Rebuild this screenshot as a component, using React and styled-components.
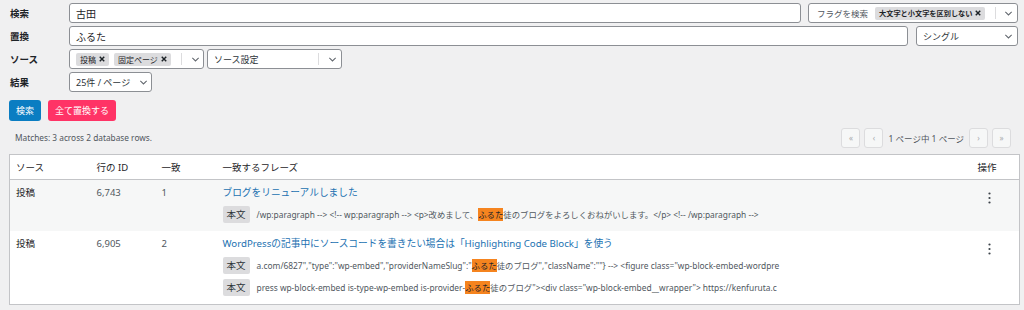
import styled, { createGlobalStyle } from "styled-components";

const GlobalStyle = createGlobalStyle`
  html, body {
    margin: 0;
    background: #f0f0f1;
    font-family: "Noto Sans", "Noto Sans CJK JP", sans-serif;
    font-size: 10px;
    color: #1d2327;
  }
`;

const Chevron = ({ size = 9 }) => (
  <svg width={size} height={size} viewBox="0 0 10 10">
    <polyline points="1.5,3.2 5,6.6 8.5,3.2" fill="none" stroke="#646970" strokeWidth="1.2" />
  </svg>
);

const Cross = () => (
  <svg width="6" height="6" viewBox="0 0 8 8">
    <path d="M1 1 L7 7 M7 1 L1 7" stroke="#1d2327" strokeWidth="1.9" />
  </svg>
);

const Dots = () => (
  <svg width="3" height="12" viewBox="0 0 3 12">
    <circle cx="1.5" cy="1.5" r="1.1" fill="#3c434a" />
    <circle cx="1.5" cy="6" r="1.1" fill="#3c434a" />
    <circle cx="1.5" cy="10.5" r="1.1" fill="#3c434a" />
  </svg>
);

const rows = [
  {
    source: "投稿",
    id: "6,743",
    count: 1,
    title: "ブログをリニューアルしました",
    contexts: [
      ["/wp:paragraph --> <!-- wp:paragraph --> <p>改めまして、", "ふるた", "徒のブログをよろしくおねがいします。</p> <!-- /wp:paragraph -->"],
    ],
  },
  {
    source: "投稿",
    id: "6,905",
    count: 2,
    title: "WordPressの記事中にソースコードを書きたい場合は「Highlighting Code Block」を使う",
    contexts: [
      ['a.com/6827","type":"wp-embed","providerNameSlug":"', "ふるた", '徒のブログ","className":""} --> <figure class="wp-block-embed-wordpre'],
      ["press wp-block-embed is-type-wp-embed is-provider-", "ふるた", '徒のブログ"><div class="wp-block-embed__wrapper"> https://kenfuruta.c'],
    ],
  },
];

function App() {
  return (
    <Page>
      <GlobalStyle />
      <Form>
        <Label>検索</Label>
        <Fields>
          <TextInput>古田</TextInput>
          <Select width={210} gap={4}>
            <Muted>フラグを検索</Muted>
            <Tag bold>
              大文字と小文字を区別しない <Cross />
            </Tag>
            <Spacer />
            <Sep />
            <ChevronBox>
              <Chevron />
            </ChevronBox>
          </Select>
        </Fields>
        <Label>置換</Label>
        <Fields gap={8}>
          <TextInput>ふるた</TextInput>
          <Select width={102}>
            <Value>シングル</Value>
            <ChevronBox>
              <Chevron />
            </ChevronBox>
          </Select>
        </Fields>
        <Label>ソース</Label>
        <Fields gap={3}>
          <Select width={135}>
            <Tag>
              投稿 <Cross />
            </Tag>
            <Tag>
              固定ページ <Cross />
            </Tag>
            <Spacer />
            <Sep />
            <ChevronBox>
              <Chevron />
            </ChevronBox>
          </Select>
          <Select width={135}>
            <Value>ソース設定</Value>
            <Sep />
            <ChevronBox>
              <Chevron />
            </ChevronBox>
          </Select>
        </Fields>
        <Label>結果</Label>
        <Fields>
          <Select width={83}>
            <Value>25件 / ページ</Value>
            <ChevronBox>
              <Chevron />
            </ChevronBox>
          </Select>
        </Fields>
      </Form>

      <Actions>
        <Button color="#0a7dc2">検索</Button>
        <Button color="#ff3366">全て置換する</Button>
      </Actions>

      <NavBar>
        <Summary>Matches: 3 across 2 database rows.</Summary>
        <Pager>
          <PageButton>«</PageButton>
          <PageButton>‹</PageButton>
          <PageInfo>1 ページ中 1 ページ</PageInfo>
          <PageButton>›</PageButton>
          <PageButton>»</PageButton>
        </Pager>
      </NavBar>

      <Table>
        <colgroup>
          <col style={{ width: 81 }} />
          <col style={{ width: 65 }} />
          <col style={{ width: 61 }} />
          <col />
          <col style={{ width: 48 }} />
        </colgroup>
        <thead>
          <tr>
            <Th>ソース</Th>
            <Th>行の ID</Th>
            <Th>一致</Th>
            <Th>一致するフレーズ</Th>
            <Th>操作</Th>
          </tr>
        </thead>
        <tbody>
          {rows.map((row, i) => (
            <Row key={row.id} shaded={i % 2 === 0}>
              <Td>{row.source}</Td>
              <Td muted>{row.id}</Td>
              <Td muted>{row.count}</Td>
              <Td>
                <Title href="#">{row.title}</Title>
                {row.contexts.map((ctx, j) => (
                  <Context key={j}>
                    <Badge>本文</Badge>
                    <Snippet>
                      {ctx[0]}
                      <Mark>{ctx[1]}</Mark>
                      {ctx[2]}
                    </Snippet>
                  </Context>
                ))}
              </Td>
              <Td>
                <Menu>
                  <Dots />
                </Menu>
              </Td>
            </Row>
          ))}
        </tbody>
      </Table>
    </Page>
  );
}

const Page = styled.div`
  padding: 3px 5px 8px 9px;
`;

const Form = styled.div`
  display: grid;
  grid-template-columns: 60px 1fr;
  row-gap: 3px;
  margin-right: 1px;
`;

const Label = styled.div`
  display: flex;
  align-items: center;
  padding-left: 1px;
  font-weight: 600;
  font-size: 9.5px;
  color: #1d2327;
`;

const Fields = styled.div`
  display: flex;
  gap: ${(p) => p.gap ?? 7}px;
  height: 20px;
`;

const TextInput = styled.div`
  flex: 1;
  display: flex;
  align-items: center;
  padding: 0 6px;
  background: #fff;
  border: 1px solid #8c8f94;
  border-radius: 3px;
  box-sizing: border-box;
  font-size: 10px;
`;

const Select = styled.div`
  width: ${(p) => p.width}px;
  box-sizing: border-box;
  display: flex;
  align-items: center;
  gap: ${(p) => p.gap ?? 5}px;
  padding-left: 6px;
  background: #fff;
  border: 1px solid #8c8f94;
  border-radius: 3px;
  font-size: 9px;
  white-space: nowrap;
  overflow: hidden;
`;

const Value = styled.span`
  flex: 1;
  color: #2c3338;
`;

const Muted = styled.span`
  color: #50575e;
  font-size: 8.5px;
  margin: 0 3px 0 2px;
`;

const Tag = styled.span`
  display: inline-flex;
  align-items: center;
  gap: 3px;
  height: 13px;
  padding: 0 4px;
  background: #dcdcde;
  border-radius: 2px;
  font-size: ${(p) => (p.bold ? 7.2 : 8)}px;
  font-weight: ${(p) => (p.bold ? 600 : 400)};
  color: #1d2327;
  flex-shrink: 0;
`;

const Spacer = styled.span`
  flex: 1;
`;

const Sep = styled.span`
  width: 1px;
  height: 12px;
  background: #dcdcde;
  flex-shrink: 0;
`;

const ChevronBox = styled.span`
  display: flex;
  align-items: center;
  justify-content: center;
  width: 17px;
  flex-shrink: 0;
`;

const Actions = styled.div`
  display: flex;
  gap: 7px;
  margin-top: 8px;
`;

const Button = styled.button`
  height: 21px;
  padding: 0 7px;
  border: none;
  border-radius: 3px;
  background: ${(p) => p.color};
  color: #fff;
  font-family: inherit;
  font-size: 9px;
`;

const NavBar = styled.div`
  display: flex;
  align-items: center;
  justify-content: space-between;
  margin-top: 6px;
  padding-left: 6px;
  padding-right: 8px;
  height: 21px;
`;

const Summary = styled.div`
  font-size: 8.3px;
  color: #50575e;
`;

const Pager = styled.div`
  display: flex;
  align-items: center;
  gap: 4px;
`;

const PageButton = styled.span`
  display: flex;
  align-items: center;
  justify-content: center;
  width: 17px;
  height: 18px;
  border: 1px solid #dcdcde;
  border-radius: 3px;
  background: #f6f7f7;
  color: #a7aaad;
  font-size: 8px;
`;

const PageInfo = styled.span`
  margin: 0 1px;
  font-size: 8.5px;
  color: #50575e;
`;

const Table = styled.table`
  width: 1011px;
  margin-top: 6px;
  border-collapse: collapse;
  table-layout: fixed;
  background: #fff;
  border: 1px solid #c3c4c7;
`;

const Th = styled.th`
  height: 24px;
  padding: 0 6px;
  text-align: left;
  font-weight: 400;
  font-size: 9.5px;
  color: #1d2327;
  border-bottom: 1px solid #c3c4c7;
`;

const Row = styled.tr`
  background: ${(p) => (p.shaded ? "#f6f7f7" : "#fff")};
`;

const Td = styled.td`
  vertical-align: top;
  padding: 7px 6px 8px;
  font-size: 9.5px;
  line-height: 12px;
  color: ${(p) => (p.muted ? "#50575e" : "#1d2327")};
`;

const Title = styled.a`
  display: block;
  font-size: 9.7px;
  color: #2271b1;
  text-decoration: none;
  margin-bottom: 7px;
`;

const Context = styled.div`
  display: flex;
  align-items: center;
  gap: 7px;
  white-space: nowrap;
  & + & {
    margin-top: 5px;
  }
`;

const Badge = styled.span`
  display: inline-flex;
  align-items: center;
  height: 17px;
  padding: 0 4px;
  background: #dcdcde;
  border-radius: 2px;
  font-size: 9.5px;
  color: #2c3338;
`;

const Snippet = styled.span`
  font-size: 8.4px;
  color: #50575e;
`;

const Mark = styled.mark`
  background: #f5841f;
  color: #1d2327;
  padding: 1px 0;
`;

const Menu = styled.div`
  display: flex;
  justify-content: flex-end;
  padding: 5px 22px 0 0;
`;

export default App;
